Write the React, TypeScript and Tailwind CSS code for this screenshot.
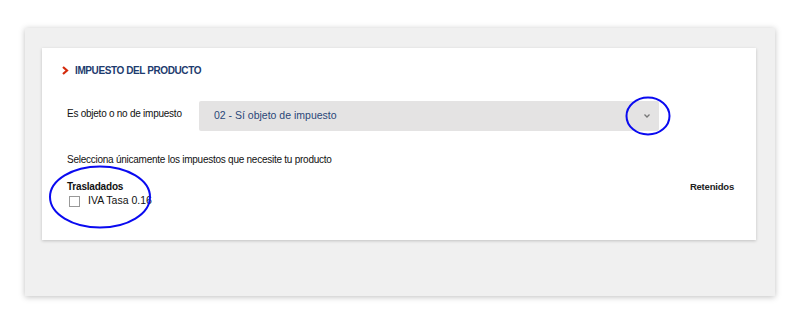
export default function App() {
  return (
    <div className="w-[800px] h-[321px] bg-white pt-[28px] pl-[25px] font-['Liberation_Sans',Arial,sans-serif] relative">
      <div className="w-[750px] h-[268px] bg-[#f0f0f0] shadow-[0_1px_6px_rgba(0,0,0,0.25)] pt-[20px] px-[17px]">
        <div className="w-[714px] h-[192px] bg-white shadow-[0_1px_3px_rgba(0,0,0,0.2)] pt-[16px] pl-[20px] pr-[22px]">
          <div className="flex items-center gap-[6px] h-[12px]">
            <svg width="7" height="9" viewBox="0 0 7 9">
              <path d="M1 1 L5 4.5 L1 8" fill="none" stroke="#d42a0c" strokeWidth="2.2" />
            </svg>
            <span className="text-[10px] font-bold tracking-[-0.4px] text-[#1d3b6e]">IMPUESTO DEL PRODUCTO</span>
          </div>
          <div className="flex items-center mt-[25px] pl-[5px]">
            <span className="w-[132px] text-[10px] tracking-[-0.25px] text-[#111] -mt-[5px]">Es objeto o no de impuesto</span>
            <div className="w-[460px] h-[30px] bg-[#e4e3e3] rounded-[2px] flex items-center justify-between pl-[15px] pr-[9px]">
              <span className="text-[10.5px] text-[#2a4778]">02 - Sí objeto de impuesto</span>
              <svg width="6" height="4" viewBox="0 0 6 4">
                <path d="M0.5 0.5 L3 3 L5.5 0.5" fill="none" stroke="#777" strokeWidth="1.3" />
              </svg>
            </div>
          </div>
          <div className="pl-[5px] mt-[22px] text-[10px] tracking-[-0.25px] leading-[14px] text-[#111]">Selecciona únicamente los impuestos que necesite tu producto</div>
          <div className="pl-[5px] mt-[13px] flex justify-between">
            <div>
              <div className="text-[10px] tracking-[-0.2px] leading-[14px] font-bold text-[#111]">Trasladados</div>
              <div className="flex items-center gap-[8px] mt-[1px] h-[12px] pl-[2px]">
                <span className="w-[11px] h-[11px] border border-[#999] bg-white"></span>
                <span className="text-[10.5px] text-[#111]">IVA Tasa 0.16</span>
              </div>
            </div>
            <div className="text-[9.5px] tracking-[-0.2px] leading-[14px] font-bold text-[#222]">Retenidos</div>
          </div>
        </div>
      </div>
      <svg className="absolute left-0 top-0 pointer-events-none" width="800" height="321">
        <ellipse cx="648" cy="116" rx="21.5" ry="18.5" fill="none" stroke="#0a0af0" strokeWidth="2" />
        <ellipse cx="100" cy="197" rx="50" ry="30.5" fill="none" stroke="#0a0af0" strokeWidth="2" />
      </svg>
    </div>
  );
}
